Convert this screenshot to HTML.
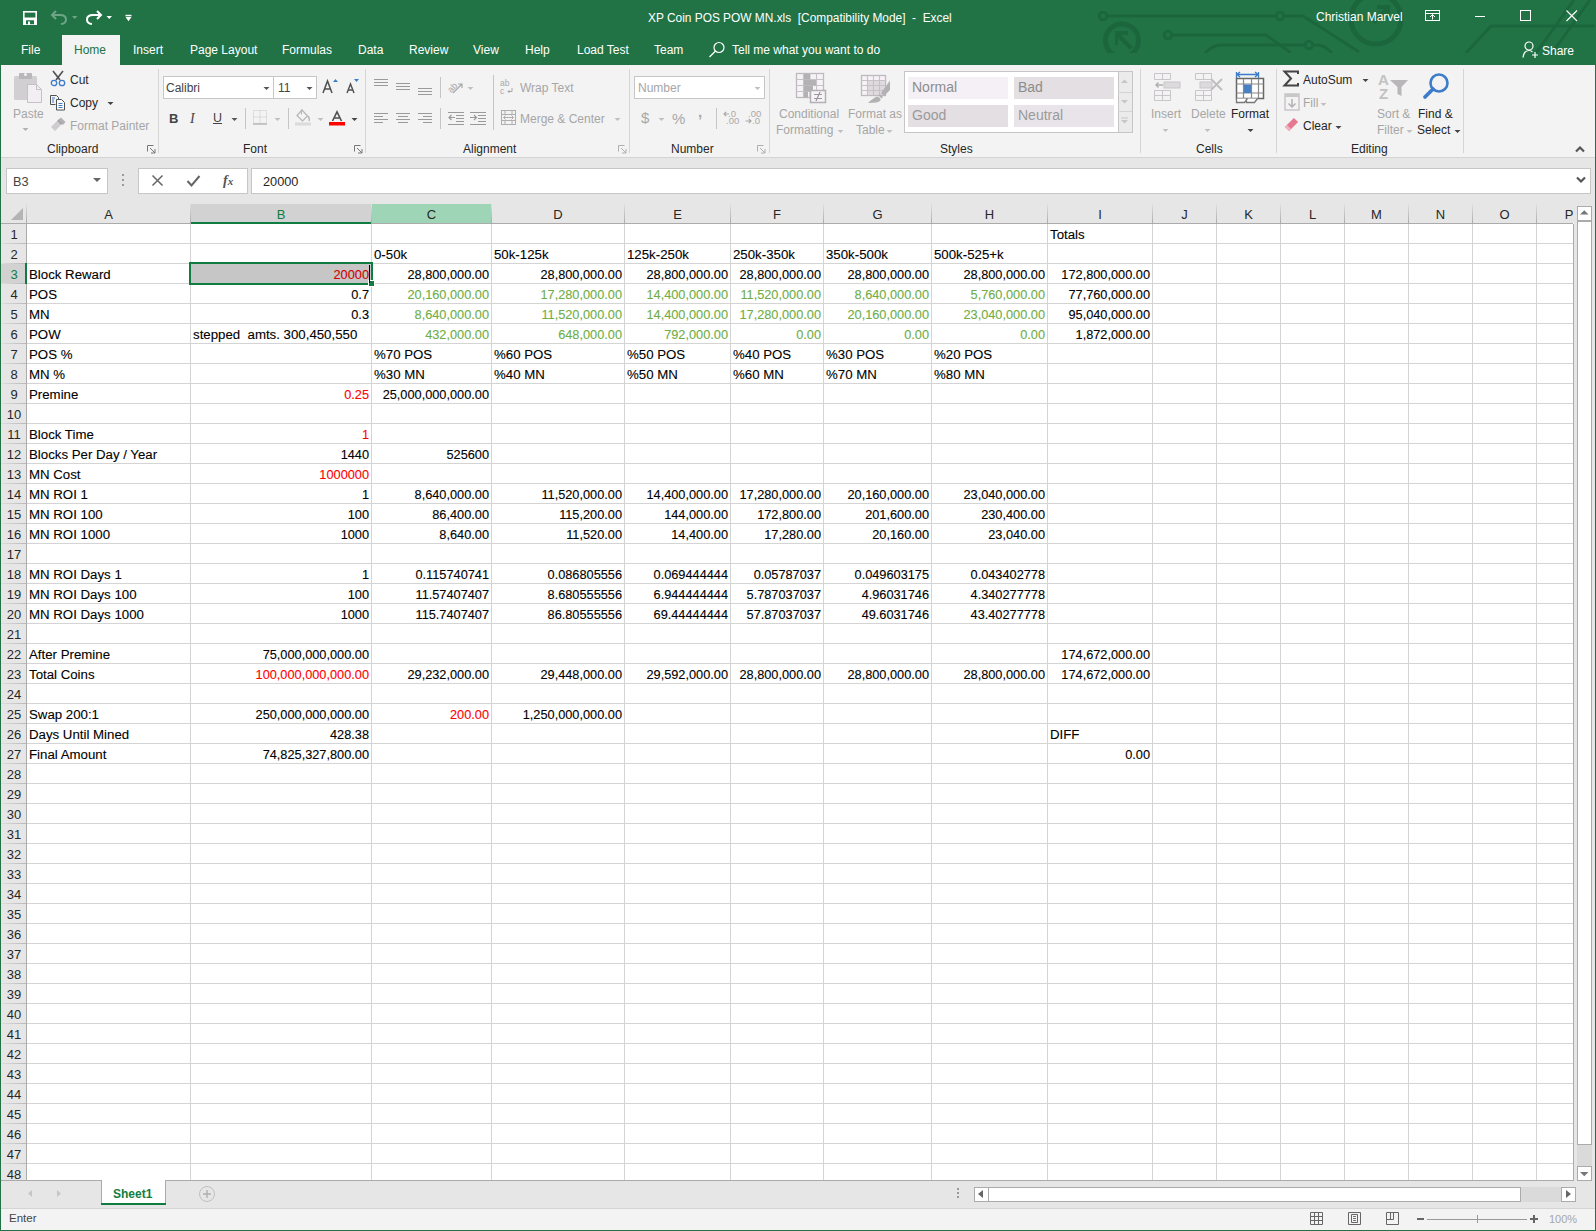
<!DOCTYPE html><html><head><meta charset="utf-8"><style>
html,body{margin:0;padding:0;}
body{width:1596px;height:1231px;position:relative;overflow:hidden;background:#fff;font-family:"Liberation Sans",sans-serif;}
.t{position:absolute;white-space:pre;line-height:20px;}
.r{position:absolute;}
.s{position:absolute;overflow:visible;}
</style></head><body>
<div class="r" style="left:0px;top:0px;width:1596px;height:65px;background:#217346;"></div>
<svg class="s" style="left:1080px;top:0px;overflow:hidden;" width="516" height="53" viewBox="0 0 516 53"><g fill="none" stroke="#1c663d" stroke-width="2.8">
<path d="M27 16 H196 M204 16 H223 L279 52"/>
<circle cx="23" cy="16" r="3.8"/><circle cx="200" cy="16" r="3.8"/>
<path d="M92 35 H186 L211 53"/><circle cx="88" cy="35" r="3.8"/>
<path d="M125 53 Q133 45 141 45 H225 M233 45 H238 Q244 45 252 53"/><circle cx="229" cy="45" r="3.8"/>
<path d="M386 53 L411 26 H516"/>
<path d="M456 53 L494 0 M472 53 L510 0"/>
</g>
<g fill="none" stroke="#1c663d" stroke-width="5"><circle cx="42" cy="40.5" r="16.5"/><circle cx="296" cy="19" r="25"/></g>
<g fill="#1c663d"><path d="M35 31 h13 v4 h-7 l12 12 -3 3 -12 -12 v7 h-3z"/><path d="M310 5 h-13 v4 h7 l-12 12 3 3 12 -12 v7 h3z"/></g></svg>
<svg class="s" style="left:0px;top:0px;" width="1" height="1" viewBox="0 0 1 1"></svg>
<svg class="s" style="left:22px;top:10px;" width="16" height="16" viewBox="0 0 16 16"><rect x="1.8" y="1.8" width="12.4" height="12.4" fill="none" stroke="#fff" stroke-width="1.6"/><rect x="1" y="7.5" width="14" height="7.5" fill="#fff"/><path d="M4 10.3h8v3.9h-4v-2.7h-2v2.7h-2z" fill="#217346"/></svg>
<svg class="s" style="left:50px;top:9px;" width="30" height="17" viewBox="0 0 30 17"><path d="M6 2 L2 6 L6 10 M2.5 6 H10 Q16 6 16 10.5 Q16 14.5 11 15" fill="none" stroke="#6fa487" stroke-width="2"/><path d="M22 7 h5.5 l-2.75 3z" fill="#6fa487"/></svg>
<svg class="s" style="left:85px;top:9px;" width="30" height="17" viewBox="0 0 30 17"><path d="M12 2 L16 6 L12 10 M15.5 6 H8 Q2 6 2 10.5 Q2 14.5 7 15" fill="none" stroke="#fff" stroke-width="2"/><path d="M21.5 7 h5.5 l-2.75 3z" fill="#fff"/></svg>
<svg class="s" style="left:125px;top:14px;" width="8" height="9" viewBox="0 0 8 9"><rect x="0.5" y="0.8" width="6" height="1.2" fill="#fff"/><path d="M0.3 2.8 h6.4 l-3.2 4.5z" fill="#fff"/></svg>
<div class="t" style="left:648px;top:7.88px;font-size:11.9px;color:#fff;">XP Coin POS POW MN.xls  [Compatibility Mode]  -  Excel</div>
<div class="t" style="left:1316px;top:6.84px;font-size:12px;color:#fff;">Christian Marvel</div>
<svg class="s" style="left:1425px;top:10px;" width="16" height="12" viewBox="0 0 16 12"><rect x="0.5" y="0.5" width="14" height="10" fill="none" stroke="#fff"/><path d="M0.5 3.5h14" stroke="#fff"/><path d="M7.5 9.5v-5 M5 7l2.5-2.5 2.5 2.5" fill="none" stroke="#fff"/></svg>
<div class="r" style="left:1475px;top:16px;width:10px;height:1px;background:#fff;"></div>
<svg class="s" style="left:1520px;top:10px;" width="12" height="12" viewBox="0 0 12 12"><rect x="0.5" y="0.5" width="10" height="10" fill="none" stroke="#fff"/></svg>
<svg class="s" style="left:1566px;top:10px;" width="12" height="12" viewBox="0 0 12 12"><path d="M0.5 0.5 L11 11 M11 0.5 L0.5 11" stroke="#fff" stroke-width="1.1"/></svg>
<svg class="s" style="left:1522px;top:41px;" width="18" height="18" viewBox="0 0 18 18"><circle cx="7" cy="5" r="4" fill="none" stroke="#fff" stroke-width="1.2"/><path d="M1 16.5 Q2 9.5 7 9.5 Q9 9.5 10.5 11" fill="none" stroke="#fff" stroke-width="1.2"/><path d="M13 11v6 M10 14h6" stroke="#fff" stroke-width="1.2"/></svg>
<div class="t" style="left:1542px;top:40.84px;font-size:12px;color:#fff;">Share</div>
<div class="r" style="left:62px;top:35px;width:58px;height:30px;background:#f3f3f3;"></div>
<div class="t" style="left:21px;top:39.84px;font-size:12px;color:#fff;">File</div>
<div class="t" style="left:133px;top:39.84px;font-size:12px;color:#fff;">Insert</div>
<div class="t" style="left:190px;top:39.84px;font-size:12px;color:#fff;">Page Layout</div>
<div class="t" style="left:282px;top:39.84px;font-size:12px;color:#fff;">Formulas</div>
<div class="t" style="left:358px;top:39.84px;font-size:12px;color:#fff;">Data</div>
<div class="t" style="left:409px;top:39.84px;font-size:12px;color:#fff;">Review</div>
<div class="t" style="left:473px;top:39.84px;font-size:12px;color:#fff;">View</div>
<div class="t" style="left:525px;top:39.84px;font-size:12px;color:#fff;">Help</div>
<div class="t" style="left:577px;top:39.84px;font-size:12px;color:#fff;">Load Test</div>
<div class="t" style="left:654px;top:39.84px;font-size:12px;color:#fff;">Team</div>
<div class="t" style="left:732px;top:39.84px;font-size:12px;color:#fff;">Tell me what you want to do</div>
<div class="t" style="left:74px;top:39.84px;font-size:12px;color:#217346;">Home</div>
<svg class="s" style="left:708px;top:41px;" width="18" height="18" viewBox="0 0 18 18"><circle cx="11" cy="6.5" r="5" fill="none" stroke="#fff" stroke-width="1.2"/><path d="M7.5 10 L1.5 16" stroke="#fff" stroke-width="1.3"/></svg>
<div class="r" style="left:1px;top:65px;width:1594px;height:92px;background:#f3f3f3;"></div>
<div class="r" style="left:1px;top:157px;width:1594px;height:1px;background:#d4d4d4;"></div>
<div class="r" style="left:158px;top:69px;width:1px;height:84px;background:#d5d5d5;"></div>
<div class="r" style="left:365px;top:69px;width:1px;height:84px;background:#d5d5d5;"></div>
<div class="r" style="left:629px;top:69px;width:1px;height:84px;background:#d5d5d5;"></div>
<div class="r" style="left:769px;top:69px;width:1px;height:84px;background:#d5d5d5;"></div>
<div class="r" style="left:1140px;top:69px;width:1px;height:84px;background:#d5d5d5;"></div>
<div class="r" style="left:1276px;top:69px;width:1px;height:84px;background:#d5d5d5;"></div>
<div class="r" style="left:1463px;top:69px;width:1px;height:84px;background:#d5d5d5;"></div>
<svg class="s" style="left:13px;top:72px;" width="32" height="32" viewBox="0 0 32 32"><rect x="1" y="4" width="23" height="24" rx="1.5" fill="#d1cfd1"/><rect x="6" y="1" width="13" height="6" rx="1" fill="#b9b7b9"/><circle cx="12.5" cy="2.5" r="1.5" fill="#f3f3f3"/><path d="M14.5 12.5h9l5 5v13h-14z" fill="#f3eef3" stroke="#c3c1c3"/><path d="M23.5 12.5v5h5" fill="none" stroke="#c3c1c3"/></svg>
<div class="t" style="left:13px;top:103.84px;font-size:12px;color:#a6a6a6;">Paste</div>
<svg class="s" style="left:22px;top:127.5px;" width="7" height="4" viewBox="0 0 7 4"><path d="M0.5 0h6l-3 3z" fill="#b0b0b0"/></svg>
<svg class="s" style="left:50px;top:70px;" width="17" height="17" viewBox="0 0 17 17"><path d="M3 1 L10 10 M13 1 L6 10" stroke="#505050" stroke-width="1.6"/><circle cx="4" cy="13" r="2.7" fill="none" stroke="#3d7cc9" stroke-width="1.3"/><circle cx="12" cy="13" r="2.7" fill="none" stroke="#3d7cc9" stroke-width="1.3"/></svg>
<div class="t" style="left:70px;top:69.84px;font-size:12px;color:#262626;">Cut</div>
<svg class="s" style="left:49px;top:94px;" width="17" height="17" viewBox="0 0 17 17"><path d="M1.5 1.5h6l2 2v2 M1.5 1.5v9h5" fill="none" stroke="#505050"/><path d="M3 4h3 M3 6h2 M3 8h2" stroke="#3d7cc9"/><path d="M7.5 5.5h5l3 3v7.5h-8z" fill="#fff" stroke="#505050"/><path d="M9.5 9.5h4 M9.5 11.5h4 M9.5 13.5h4" stroke="#3d7cc9"/></svg>
<div class="t" style="left:70px;top:92.84px;font-size:12px;color:#262626;">Copy</div>
<svg class="s" style="left:107px;top:101.5px;" width="7" height="4" viewBox="0 0 7 4"><path d="M0.5 0h6l-3 3z" fill="#444"/></svg>
<svg class="s" style="left:50px;top:117px;" width="17" height="15" viewBox="0 0 17 15"><path d="M1 10 L7 4 L11 8 L5 14z" fill="#cfcccf"/><path d="M8 3 L11 0.5 L15.5 5 L13 8z" fill="#b3b1b3"/><path d="M7 4 L8.5 2.5 L12.5 6.5 L11 8z" fill="#a5a3a5"/></svg>
<div class="t" style="left:70px;top:115.84px;font-size:12px;color:#a6a6a6;">Format Painter</div>
<div class="t" style="left:47px;top:138.84px;font-size:12px;color:#262626;">Clipboard</div>
<svg class="s" style="left:147px;top:145px;" width="9" height="9" viewBox="0 0 9 9"><path d="M0.5 6.5v-6h6" fill="none" stroke="#777"/><path d="M3 3l5 5 M8 4v4h-4" fill="none" stroke="#777"/></svg>
<div class="r" style="left:163px;top:76px;width:154px;height:23px;background:#fff;box-sizing:border-box;border:1px solid #c6c6c6;"></div>
<div class="r" style="left:273px;top:77px;width:1px;height:21px;background:#c6c6c6;"></div>
<div class="t" style="left:166px;top:77.84px;font-size:12px;color:#444;">Calibri</div>
<svg class="s" style="left:263px;top:86.5px;" width="7" height="4" viewBox="0 0 7 4"><path d="M0.5 0h6l-3 3z" fill="#555"/></svg>
<div class="t" style="left:278px;top:77.84px;font-size:12px;color:#444;">11</div>
<svg class="s" style="left:306px;top:86.5px;" width="7" height="4" viewBox="0 0 7 4"><path d="M0.5 0h6l-3 3z" fill="#555"/></svg>
<svg class="s" style="left:322px;top:79px;" width="16" height="15" viewBox="0 0 16 15"><path d="M1 14 L5.5 2 L10 14 M2.6 10h5.8" fill="none" stroke="#505050" stroke-width="1.5"/><path d="M11 3h5l-2.5-3z" fill="#3d7cc9"/></svg>
<svg class="s" style="left:345px;top:79px;" width="16" height="15" viewBox="0 0 16 15"><path d="M2 14 L5.5 5 L9 14 M3.2 11h4.6" fill="none" stroke="#505050" stroke-width="1.4"/><path d="M9 0h5l-2.5 3z" fill="#3d7cc9"/></svg>
<div class="t" style="left:169px;top:108.50px;font-size:13px;color:#444;"><b>B</b></div>
<div class="t" style="left:190px;top:108.50px;font-size:13px;color:#444;font-family:Liberation Serif;font-size:14px;"><i>I</i></div>
<div class="t" style="left:213px;top:107.67px;font-size:12.5px;color:#444;"><u>U</u></div>
<svg class="s" style="left:231px;top:117.5px;" width="7" height="4" viewBox="0 0 7 4"><path d="M0.5 0h6l-3 3z" fill="#555"/></svg>
<div class="r" style="left:245px;top:108px;width:1px;height:21px;background:#c6c6c6;"></div>
<svg class="s" style="left:253px;top:110px;" width="15" height="15" viewBox="0 0 15 15"><path d="M0.5 0.5h13v13h-13z M0.5 7h13 M7 0.5v13" fill="none" stroke="#c8c4c8" stroke-dasharray="1 1"/><path d="M0 14h14" stroke="#b8b8b8" stroke-width="1.5"/></svg>
<svg class="s" style="left:274px;top:117.5px;" width="7" height="4" viewBox="0 0 7 4"><path d="M0.5 0h6l-3 3z" fill="#c0c0c0"/></svg>
<div class="r" style="left:288px;top:108px;width:1px;height:21px;background:#c6c6c6;"></div>
<svg class="s" style="left:295px;top:109px;" width="18" height="18" viewBox="0 0 18 18"><path d="M7 1 L12.5 7 L7.5 12 L2 6.5z" fill="none" stroke="#b8b5b8" stroke-width="1.2"/><path d="M6.5 0.5v5" stroke="#b8b5b8"/><path d="M13 7 q2 3 1 5" fill="none" stroke="#b8b5b8" stroke-width="1.4"/><rect x="0" y="13.5" width="16" height="3" fill="#dcdadc"/></svg>
<svg class="s" style="left:317px;top:117.5px;" width="7" height="4" viewBox="0 0 7 4"><path d="M0.5 0h6l-3 3z" fill="#c0c0c0"/></svg>
<svg class="s" style="left:329px;top:111px;" width="18" height="15" viewBox="0 0 18 15"><path d="M3.5 10 L8 0.8 L12.5 10 M5 7h6" fill="none" stroke="#505050" stroke-width="1.6"/><rect x="0" y="11" width="16" height="3.5" fill="#f00"/></svg>
<svg class="s" style="left:351px;top:117.5px;" width="7" height="4" viewBox="0 0 7 4"><path d="M0.5 0h6l-3 3z" fill="#444"/></svg>
<div class="t" style="left:243px;top:138.84px;font-size:12px;color:#262626;">Font</div>
<svg class="s" style="left:354px;top:145px;" width="9" height="9" viewBox="0 0 9 9"><path d="M0.5 6.5v-6h6" fill="none" stroke="#777"/><path d="M3 3l5 5 M8 4v4h-4" fill="none" stroke="#777"/></svg>
<svg class="s" style="left:374px;top:0px;" width="16" height="200" viewBox="0 0 16 200"><rect x="0" y="79" width="14" height="1" fill="#9a9a9a"/><rect x="0" y="82" width="14" height="1" fill="#9a9a9a"/><rect x="0" y="85" width="14" height="1" fill="#9a9a9a"/></svg>
<svg class="s" style="left:396px;top:0px;" width="16" height="200" viewBox="0 0 16 200"><rect x="0" y="83" width="14" height="1" fill="#9a9a9a"/><rect x="0" y="86" width="14" height="1" fill="#9a9a9a"/><rect x="0" y="89" width="14" height="1" fill="#9a9a9a"/></svg>
<svg class="s" style="left:418px;top:0px;" width="16" height="200" viewBox="0 0 16 200"><rect x="0" y="88" width="14" height="1" fill="#9a9a9a"/><rect x="0" y="91" width="14" height="1" fill="#9a9a9a"/><rect x="0" y="94" width="14" height="1" fill="#9a9a9a"/></svg>
<svg class="s" style="left:374px;top:0px;" width="16" height="200" viewBox="0 0 16 200"><rect x="0" y="113" width="14" height="1" fill="#9a9a9a"/><rect x="0" y="116" width="9" height="1" fill="#9a9a9a"/><rect x="0" y="119" width="14" height="1" fill="#9a9a9a"/><rect x="0" y="122" width="9" height="1" fill="#9a9a9a"/></svg>
<svg class="s" style="left:396px;top:0px;" width="16" height="200" viewBox="0 0 16 200"><rect x="0" y="113" width="14" height="1" fill="#9a9a9a"/><rect x="2" y="116" width="10" height="1" fill="#9a9a9a"/><rect x="0" y="119" width="14" height="1" fill="#9a9a9a"/><rect x="2" y="122" width="10" height="1" fill="#9a9a9a"/></svg>
<svg class="s" style="left:418px;top:0px;" width="16" height="200" viewBox="0 0 16 200"><rect x="0" y="113" width="14" height="1" fill="#9a9a9a"/><rect x="5" y="116" width="9" height="1" fill="#9a9a9a"/><rect x="0" y="119" width="14" height="1" fill="#9a9a9a"/><rect x="5" y="122" width="9" height="1" fill="#9a9a9a"/></svg>
<div class="r" style="left:440px;top:77px;width:1px;height:21px;background:#c6c6c6;"></div>
<div class="r" style="left:440px;top:108px;width:1px;height:21px;background:#c6c6c6;"></div>
<svg class="s" style="left:447px;top:79px;" width="18" height="16" viewBox="0 0 18 16"><text x="0" y="11" font-size="9" fill="#a8a8a8" transform="rotate(-45 6 8)" font-family="Liberation Sans">ab</text><path d="M6 14 L15 5 M11 5h4v4" fill="none" stroke="#a8a8a8" stroke-width="1.2"/></svg>
<svg class="s" style="left:467px;top:86.5px;" width="7" height="4" viewBox="0 0 7 4"><path d="M0.5 0h6l-3 3z" fill="#c0c0c0"/></svg>
<svg class="s" style="left:448px;top:0px;" width="16" height="200" viewBox="0 0 16 200"><rect x="0" y="112" width="16" height="1" fill="#9a9a9a"/><rect x="8" y="115" width="8" height="1" fill="#9a9a9a"/><rect x="8" y="118" width="8" height="1" fill="#9a9a9a"/><rect x="8" y="121" width="8" height="1" fill="#9a9a9a"/><rect x="0" y="124" width="16" height="1" fill="#9a9a9a"/></svg>
<svg class="s" style="left:448px;top:114px;" width="8" height="8" viewBox="0 0 8 8"><path d="M1 3.5h6 M3.5 1l-2.5 2.5 2.5 2.5" fill="none" stroke="#9a9a9a" stroke-width="1.2"/></svg>
<svg class="s" style="left:470px;top:0px;" width="16" height="200" viewBox="0 0 16 200"><rect x="0" y="112" width="16" height="1" fill="#9a9a9a"/><rect x="8" y="115" width="8" height="1" fill="#9a9a9a"/><rect x="8" y="118" width="8" height="1" fill="#9a9a9a"/><rect x="8" y="121" width="8" height="1" fill="#9a9a9a"/><rect x="0" y="124" width="16" height="1" fill="#9a9a9a"/></svg>
<svg class="s" style="left:470px;top:114px;" width="8" height="8" viewBox="0 0 8 8"><path d="M0 3.5h6 M4 1l2.5 2.5 -2.5 2.5" fill="none" stroke="#9a9a9a" stroke-width="1.2"/></svg>
<div class="r" style="left:493px;top:75px;width:1px;height:55px;background:#c6c6c6;"></div>
<svg class="s" style="left:500px;top:79px;" width="16" height="16" viewBox="0 0 16 16"><text x="0" y="7" font-size="8.5" fill="#a8a8a8" font-family="Liberation Sans">ab</text><text x="0" y="15" font-size="8.5" fill="#a8a8a8" font-family="Liberation Sans">c</text><path d="M12 9v3.5h-4 M9.5 11l-1.5 1.5 1.5 1.5" fill="none" stroke="#a8a8a8"/></svg>
<div class="t" style="left:520px;top:77.84px;font-size:12px;color:#a6a6a6;">Wrap Text</div>
<svg class="s" style="left:500px;top:109px;" width="17" height="17" viewBox="0 0 17 17"><rect x="1.5" y="1.5" width="14" height="14" fill="none" stroke="#b0adb0"/><path d="M1.5 5.5h14 M1.5 11.5h14 M5 1.5v4 M12 1.5v4 M5 11.5v4 M12 11.5v4" stroke="#b0adb0"/><path d="M3.5 8.5h10 M5.5 6.5l-2 2 2 2 M11.5 6.5l2 2-2 2" fill="none" stroke="#b0adb0"/></svg>
<div class="t" style="left:520px;top:108.84px;font-size:12px;color:#a6a6a6;">Merge &amp; Center</div>
<svg class="s" style="left:614px;top:117.5px;" width="7" height="4" viewBox="0 0 7 4"><path d="M0.5 0h6l-3 3z" fill="#c0c0c0"/></svg>
<div class="t" style="left:463px;top:138.84px;font-size:12px;color:#262626;">Alignment</div>
<svg class="s" style="left:618px;top:145px;" width="9" height="9" viewBox="0 0 9 9"><path d="M0.5 6.5v-6h6" fill="none" stroke="#b0b0b0"/><path d="M3 3l5 5 M8 4v4h-4" fill="none" stroke="#b0b0b0"/></svg>
<div class="r" style="left:634px;top:76px;width:131px;height:23px;background:#fff;box-sizing:border-box;border:1px solid #c6c6c6;"></div>
<div class="t" style="left:638px;top:77.84px;font-size:12px;color:#a6a6a6;">Number</div>
<svg class="s" style="left:754px;top:86.5px;" width="7" height="4" viewBox="0 0 7 4"><path d="M0.5 0h6l-3 3z" fill="#c0c0c0"/></svg>
<div class="t" style="left:641px;top:107.80px;font-size:15px;color:#a8a8a8;">$</div>
<svg class="s" style="left:658px;top:117.5px;" width="7" height="4" viewBox="0 0 7 4"><path d="M0.5 0h6l-3 3z" fill="#c0c0c0"/></svg>
<div class="t" style="left:672px;top:108.80px;font-size:15px;color:#a8a8a8;">%</div>
<div class="t" style="left:698px;top:101.80px;font-size:15px;color:#a8a8a8;font-weight:bold;">,</div>
<div class="r" style="left:716px;top:108px;width:1px;height:21px;background:#c6c6c6;"></div>
<svg class="s" style="left:723px;top:110px;" width="17" height="16" viewBox="0 0 17 16"><text x="5" y="7" font-size="9.5" fill="#a8a8a8" font-family="Liberation Sans">.0</text><text x="3" y="14" font-size="9.5" fill="#a8a8a8" font-family="Liberation Sans">.00</text><path d="M1 4h5 M3.2 1.8l-2.2 2.2 2.2 2.2" fill="none" stroke="#a8a8a8" stroke-width="1.2"/></svg>
<svg class="s" style="left:745px;top:110px;" width="17" height="16" viewBox="0 0 17 16"><text x="3" y="7" font-size="9.5" fill="#a8a8a8" font-family="Liberation Sans">.00</text><text x="7" y="14" font-size="9.5" fill="#a8a8a8" font-family="Liberation Sans">.0</text><path d="M0.5 11h5.5 M3.8 8.8l2.2 2.2-2.2 2.2" fill="none" stroke="#a8a8a8" stroke-width="1.2"/></svg>
<div class="t" style="left:671px;top:138.84px;font-size:12px;color:#262626;">Number</div>
<svg class="s" style="left:757px;top:145px;" width="9" height="9" viewBox="0 0 9 9"><path d="M0.5 6.5v-6h6" fill="none" stroke="#b0b0b0"/><path d="M3 3l5 5 M8 4v4h-4" fill="none" stroke="#b0b0b0"/></svg>
<svg class="s" style="left:795px;top:72px;" width="33" height="33" viewBox="0 0 33 33"><rect x="1.5" y="1.5" width="27" height="24" fill="#f7f2f7" stroke="#bdbabd" stroke-width="1.3"/><path d="M1.5 7.5h27 M1.5 13.5h27 M1.5 19.5h27 M8.5 1.5v24 M15 1.5v24 M21.5 1.5v24" stroke="#c6c3c6" stroke-width="1.1"/><g fill="#b3b1b3"><rect x="9" y="2" width="6" height="5.5"/><rect x="9" y="8" width="12" height="5.5"/><rect x="9" y="14" width="9" height="5.5"/><rect x="9" y="20" width="4" height="5.5"/></g><rect x="15.5" y="18.5" width="15" height="12" fill="#f7f2f7" stroke="#b3b1b3" stroke-width="1.5"/><path d="M19 22.5h8 M19 26.5h8 M25 20 L21 29" stroke="#9a989a" stroke-width="1.2"/></svg>
<div class="t" style="left:779px;top:103.84px;font-size:12px;color:#a6a6a6;">Conditional</div>
<div class="t" style="left:776px;top:119.84px;font-size:12px;color:#a6a6a6;">Formatting</div>
<svg class="s" style="left:837px;top:129.5px;" width="7" height="4" viewBox="0 0 7 4"><path d="M0.5 0h6l-3 3z" fill="#c0c0c0"/></svg>
<svg class="s" style="left:860px;top:73px;" width="32" height="32" viewBox="0 0 32 32"><rect x="1.5" y="2.5" width="24" height="20" fill="#f7f2f7" stroke="#bdbabd" stroke-width="1.3"/><rect x="8" y="8" width="17" height="14" fill="#dedade"/><path d="M1.5 7.5h24 M1.5 12.5h24 M1.5 17.5h24 M7.5 2.5v20 M13.5 2.5v20 M19.5 2.5v20" stroke="#c6c3c6" stroke-width="1.1"/><path d="M30 7.5 V17 L24 23 L21 20z" fill="#b3b1b3"/><path d="M20 21 L23 24 L21.5 25.5 L18.5 22.5z" fill="#b3b1b3"/><path d="M17 23.5 Q21 24.5 20.5 27.5 Q19 30 8 30 Q13 25 17 23.5z" fill="#b3b1b3"/></svg>
<div class="t" style="left:848px;top:103.84px;font-size:12px;color:#a6a6a6;">Format as</div>
<div class="t" style="left:856px;top:119.84px;font-size:12px;color:#a6a6a6;">Table</div>
<svg class="s" style="left:886px;top:129.5px;" width="7" height="4" viewBox="0 0 7 4"><path d="M0.5 0h6l-3 3z" fill="#c0c0c0"/></svg>
<div class="r" style="left:904px;top:71px;width:229px;height:62px;background:#fff;box-sizing:border-box;border:1px solid #c6c6c6;"></div>
<div class="r" style="left:1118px;top:72px;width:14px;height:60px;background:#ebebeb;border-left:1px solid #c6c6c6;box-sizing:border-box;"></div>
<div class="r" style="left:1118px;top:92px;width:14px;height:1px;background:#d4d4d4;"></div>
<div class="r" style="left:1118px;top:111px;width:14px;height:1px;background:#d4d4d4;"></div>
<svg class="s" style="left:1121px;top:79px;" width="8" height="5" viewBox="0 0 8 5"><path d="M0 4h7l-3.5-3.5z" fill="#c6c6c6"/></svg>
<svg class="s" style="left:1121px;top:100px;" width="8" height="5" viewBox="0 0 8 5"><path d="M0 0h7l-3.5 3.5z" fill="#c6c6c6"/></svg>
<svg class="s" style="left:1121px;top:117px;" width="8" height="8" viewBox="0 0 8 8"><path d="M0 1h7" stroke="#c6c6c6"/><path d="M0 3h7l-3.5 3.5z" fill="#c6c6c6"/></svg>
<div class="r" style="left:908px;top:77px;width:100px;height:22px;background:#f5f0f5;"></div>
<div class="r" style="left:1014px;top:77px;width:100px;height:22px;background:#e4dfe3;"></div>
<div class="r" style="left:908px;top:105px;width:100px;height:22px;background:#e4dfe3;"></div>
<div class="r" style="left:1014px;top:105px;width:100px;height:22px;background:#e9e4e9;"></div>
<div class="t" style="left:912px;top:77.15px;font-size:14px;color:#8c8c8c;">Normal</div>
<div class="t" style="left:1018px;top:77.15px;font-size:14px;color:#8c8c8c;">Bad</div>
<div class="t" style="left:912px;top:105.15px;font-size:14px;color:#9a9a9a;">Good</div>
<div class="t" style="left:1018px;top:105.15px;font-size:14px;color:#9a9a9a;">Neutral</div>
<div class="t" style="left:940px;top:138.84px;font-size:12px;color:#262626;">Styles</div>
<svg class="s" style="left:1153px;top:73px;" width="28" height="28" viewBox="0 0 28 28"><g fill="none" stroke="#c9c6c9"><path d="M1.5 0.5h16v6h-16z M9.5 0.5v6 M1.5 17.5h16v10h-16z M1.5 22.5h16 M9.5 17.5v10"/></g><rect x="11" y="9" width="16" height="6" fill="#dcdadc" stroke="#c9c6c9"/><path d="M3 12h7 M5.5 9.5l-2.5 2.5 2.5 2.5" fill="none" stroke="#b3b1b3" stroke-width="1.5"/></svg>
<div class="t" style="left:1151px;top:103.84px;font-size:12px;color:#a6a6a6;">Insert</div>
<svg class="s" style="left:1162px;top:128.5px;" width="7" height="4" viewBox="0 0 7 4"><path d="M0.5 0h6l-3 3z" fill="#c0c0c0"/></svg>
<svg class="s" style="left:1194px;top:73px;" width="30" height="28" viewBox="0 0 30 28"><g fill="none" stroke="#c9c6c9"><path d="M1.5 0.5h16v6h-16z M9.5 0.5v6 M1.5 17.5h16v10h-16z M1.5 22.5h16 M9.5 17.5v10"/></g><rect x="6" y="9" width="12" height="6" fill="#dcdadc" stroke="#c9c6c9"/><path d="M17 6 L28 17 M28 6 L17 17" stroke="#c0bec0" stroke-width="2"/></svg>
<div class="t" style="left:1191px;top:103.84px;font-size:12px;color:#a6a6a6;">Delete</div>
<svg class="s" style="left:1204px;top:128.5px;" width="7" height="4" viewBox="0 0 7 4"><path d="M0.5 0h6l-3 3z" fill="#c0c0c0"/></svg>
<svg class="s" style="left:1235px;top:71px;" width="31" height="33" viewBox="0 0 31 33"><path d="M1.5 1v6 M23.5 1v6 M2 3.5h21 M5 1l-3 2.5 3 2.5 M20 1l3 2.5-3 2.5" fill="none" stroke="#3d7cc9" stroke-width="1.3"/><rect x="1.5" y="7.5" width="27" height="20" fill="#fff" stroke="#666" stroke-width="1.5"/><path d="M1.5 13h27 M1.5 22h27 M8.5 7.5v20 M16.5 7.5v20 M23.5 7.5v20" stroke="#888" stroke-width="1.2"/><rect x="9" y="13.5" width="7" height="8.5" fill="#4a7fc0"/><path d="M1.5 27.5v4h8l3-4 M11.5 27.5v4h8l3-4" fill="#fff" stroke="#777" stroke-width="1.3"/></svg>
<div class="t" style="left:1231px;top:103.84px;font-size:12px;color:#262626;">Format</div>
<svg class="s" style="left:1247px;top:128.5px;" width="7" height="4" viewBox="0 0 7 4"><path d="M0.5 0h6l-3 3z" fill="#444"/></svg>
<div class="t" style="left:1196px;top:138.84px;font-size:12px;color:#262626;">Cells</div>
<svg class="s" style="left:1283px;top:70px;" width="17" height="17" viewBox="0 0 17 17"><path d="M15 4 V1.5 H1.5 L8 8.5 L1.5 15.5 H15 V13" fill="none" stroke="#444" stroke-width="2"/></svg>
<div class="t" style="left:1303px;top:69.84px;font-size:12px;color:#262626;">AutoSum</div>
<svg class="s" style="left:1362px;top:78.5px;" width="7" height="4" viewBox="0 0 7 4"><path d="M0.5 0h6l-3 3z" fill="#444"/></svg>
<svg class="s" style="left:1284px;top:93px;" width="17" height="18" viewBox="0 0 17 18"><rect x="1" y="1" width="14" height="16" fill="none" stroke="#c9c6c9" stroke-width="1.5"/><rect x="1" y="1" width="14" height="3" fill="#c9c6c9"/><path d="M8 6v8 M4.5 10.5 L8 14 L11.5 10.5" fill="none" stroke="#b3b1b3" stroke-width="1.5"/></svg>
<div class="t" style="left:1303px;top:92.84px;font-size:12px;color:#a6a6a6;">Fill</div>
<svg class="s" style="left:1320px;top:102.5px;" width="7" height="4" viewBox="0 0 7 4"><path d="M0.5 0h6l-3 3z" fill="#c0c0c0"/></svg>
<svg class="s" style="left:1284px;top:117px;" width="16" height="16" viewBox="0 0 16 16"><path d="M0.9 9.9 L9.9 0.9 L14.1 5.1 L5.1 14.1z" fill="#e57990"/><path d="M0.9 9.9 L2.9 7.9 L7.1 12.1 L5.1 14.1z" fill="#f4b3c1"/></svg>
<div class="t" style="left:1303px;top:115.84px;font-size:12px;color:#262626;">Clear</div>
<svg class="s" style="left:1335px;top:125.5px;" width="7" height="4" viewBox="0 0 7 4"><path d="M0.5 0h6l-3 3z" fill="#444"/></svg>
<svg class="s" style="left:1378px;top:72px;" width="32" height="30" viewBox="0 0 32 30"><text x="0" y="13" font-size="15" font-weight="bold" fill="#c3c1c3" font-family="Liberation Sans">A</text><text x="1" y="27" font-size="15" font-weight="bold" fill="#c3c1c3" font-family="Liberation Sans">Z</text><path d="M12 8h18l-6.5 7v9l-4-2v-7z" fill="#b8b6b8"/></svg>
<div class="t" style="left:1377px;top:103.84px;font-size:12px;color:#a6a6a6;">Sort &amp;</div>
<div class="t" style="left:1377px;top:119.84px;font-size:12px;color:#a6a6a6;">Filter</div>
<svg class="s" style="left:1406px;top:129.5px;" width="7" height="4" viewBox="0 0 7 4"><path d="M0.5 0h6l-3 3z" fill="#c0c0c0"/></svg>
<svg class="s" style="left:1422px;top:72px;" width="30" height="30" viewBox="0 0 30 30"><circle cx="17" cy="11" r="8.5" fill="none" stroke="#3d7cc9" stroke-width="2.6"/><path d="M11 17 L3 25" stroke="#3d7cc9" stroke-width="3.8" stroke-linecap="round"/></svg>
<div class="t" style="left:1418px;top:103.84px;font-size:12px;color:#262626;">Find &amp;</div>
<div class="t" style="left:1417px;top:119.84px;font-size:12px;color:#262626;">Select</div>
<svg class="s" style="left:1454px;top:129.5px;" width="7" height="4" viewBox="0 0 7 4"><path d="M0.5 0h6l-3 3z" fill="#444"/></svg>
<div class="t" style="left:1351px;top:138.84px;font-size:12px;color:#262626;">Editing</div>
<svg class="s" style="left:1575px;top:145px;" width="11" height="8" viewBox="0 0 11 8"><path d="M1 6.5 L5 2.5 L9 6.5" fill="none" stroke="#555" stroke-width="2.2"/></svg>
<div class="r" style="left:1px;top:158px;width:1594px;height:46px;background:#e6e6e6;"></div>
<div class="r" style="left:6px;top:168px;width:102px;height:26px;background:#fff;box-sizing:border-box;border:1px solid #c6c6c6;"></div>
<div class="t" style="left:13px;top:171.58px;font-size:12.75px;color:#444;">B3</div>
<svg class="s" style="left:93px;top:178px;" width="9" height="6" viewBox="0 0 9 6"><path d="M0 0h8l-4 4z" fill="#666"/></svg>
<div class="r" style="left:122px;top:174px;width:2px;height:2px;background:#9a9a9a;"></div>
<div class="r" style="left:122px;top:179px;width:2px;height:2px;background:#9a9a9a;"></div>
<div class="r" style="left:122px;top:184px;width:2px;height:2px;background:#9a9a9a;"></div>
<div class="r" style="left:138px;top:168px;width:110px;height:26px;background:#fff;box-sizing:border-box;border:1px solid #c6c6c6;"></div>
<svg class="s" style="left:151px;top:174px;" width="14" height="14" viewBox="0 0 14 14"><path d="M1.5 1.5 L11.5 11.5 M11.5 1.5 L1.5 11.5" stroke="#666" stroke-width="1.5"/></svg>
<svg class="s" style="left:186px;top:174px;" width="16" height="14" viewBox="0 0 16 14"><path d="M1.5 7 L5.5 11.5 L13.5 2" fill="none" stroke="#666" stroke-width="2"/></svg>
<div class="t" style="left:223px;top:171.15px;font-size:14px;color:#555;font-family:Liberation Serif;font-style:italic;font-weight:bold;">f<span style="font-size:11px">x</span></div>
<div class="r" style="left:251px;top:168px;width:1340px;height:26px;background:#fff;box-sizing:border-box;border:1px solid #c6c6c6;"></div>
<div class="t" style="left:263px;top:171.58px;font-size:12.75px;color:#262626;">20000</div>
<svg class="s" style="left:1576px;top:176px;" width="11" height="8" viewBox="0 0 11 8"><path d="M1 1.5 L5 5.5 L9 1.5" fill="none" stroke="#555" stroke-width="2.2"/></svg>
<div class="r" style="left:1px;top:204px;width:1594px;height:19px;background:#e6e6e6;"></div>
<div class="r" style="left:191px;top:204px;width:180px;height:18px;background:#d2d2d2;"></div>
<div class="r" style="left:191px;top:222px;width:180px;height:2px;background:#107c41;"></div>
<div class="r" style="left:372px;top:204px;width:119px;height:19px;background:#9fd5b7;"></div>
<div class="r" style="left:1px;top:223px;width:190px;height:1px;background:#ababab;"></div>
<div class="r" style="left:371px;top:223px;width:1202px;height:1px;background:#ababab;"></div>
<svg class="s" style="left:11px;top:208px;" width="12" height="12" viewBox="0 0 12 12"><path d="M12 0 V12 H0z" fill="#b4b4b4"/></svg>
<div class="r" style="left:26px;top:204px;width:1px;height:20px;background:linear-gradient(#e0e0e0,#a8a8a8);"></div>
<div class="r" style="left:190px;top:204px;width:1px;height:20px;background:linear-gradient(#e0e0e0,#a8a8a8);"></div>
<div class="r" style="left:371px;top:204px;width:1px;height:20px;background:linear-gradient(#e0e0e0,#a8a8a8);"></div>
<div class="r" style="left:491px;top:204px;width:1px;height:20px;background:linear-gradient(#e0e0e0,#a8a8a8);"></div>
<div class="r" style="left:624px;top:204px;width:1px;height:20px;background:linear-gradient(#e0e0e0,#a8a8a8);"></div>
<div class="r" style="left:730px;top:204px;width:1px;height:20px;background:linear-gradient(#e0e0e0,#a8a8a8);"></div>
<div class="r" style="left:823px;top:204px;width:1px;height:20px;background:linear-gradient(#e0e0e0,#a8a8a8);"></div>
<div class="r" style="left:931px;top:204px;width:1px;height:20px;background:linear-gradient(#e0e0e0,#a8a8a8);"></div>
<div class="r" style="left:1047px;top:204px;width:1px;height:20px;background:linear-gradient(#e0e0e0,#a8a8a8);"></div>
<div class="r" style="left:1152px;top:204px;width:1px;height:20px;background:linear-gradient(#e0e0e0,#a8a8a8);"></div>
<div class="r" style="left:1216px;top:204px;width:1px;height:20px;background:linear-gradient(#e0e0e0,#a8a8a8);"></div>
<div class="r" style="left:1280px;top:204px;width:1px;height:20px;background:linear-gradient(#e0e0e0,#a8a8a8);"></div>
<div class="r" style="left:1344px;top:204px;width:1px;height:20px;background:linear-gradient(#e0e0e0,#a8a8a8);"></div>
<div class="r" style="left:1408px;top:204px;width:1px;height:20px;background:linear-gradient(#e0e0e0,#a8a8a8);"></div>
<div class="r" style="left:1472px;top:204px;width:1px;height:20px;background:linear-gradient(#e0e0e0,#a8a8a8);"></div>
<div class="r" style="left:1536px;top:204px;width:1px;height:20px;background:linear-gradient(#e0e0e0,#a8a8a8);"></div>
<div class="t" style="left:-91.5px;width:400px;text-align:center;top:204.50px;font-size:13px;color:#262626;">A</div>
<div class="t" style="left:81.0px;width:400px;text-align:center;top:204.50px;font-size:13px;color:#107c41;">B</div>
<div class="t" style="left:231.5px;width:400px;text-align:center;top:204.50px;font-size:13px;color:#262626;">C</div>
<div class="t" style="left:358.0px;width:400px;text-align:center;top:204.50px;font-size:13px;color:#262626;">D</div>
<div class="t" style="left:477.5px;width:400px;text-align:center;top:204.50px;font-size:13px;color:#262626;">E</div>
<div class="t" style="left:577.0px;width:400px;text-align:center;top:204.50px;font-size:13px;color:#262626;">F</div>
<div class="t" style="left:677.5px;width:400px;text-align:center;top:204.50px;font-size:13px;color:#262626;">G</div>
<div class="t" style="left:789.5px;width:400px;text-align:center;top:204.50px;font-size:13px;color:#262626;">H</div>
<div class="t" style="left:900.0px;width:400px;text-align:center;top:204.50px;font-size:13px;color:#262626;">I</div>
<div class="t" style="left:984.5px;width:400px;text-align:center;top:204.50px;font-size:13px;color:#262626;">J</div>
<div class="t" style="left:1048.5px;width:400px;text-align:center;top:204.50px;font-size:13px;color:#262626;">K</div>
<div class="t" style="left:1112.5px;width:400px;text-align:center;top:204.50px;font-size:13px;color:#262626;">L</div>
<div class="t" style="left:1176.5px;width:400px;text-align:center;top:204.50px;font-size:13px;color:#262626;">M</div>
<div class="t" style="left:1240.5px;width:400px;text-align:center;top:204.50px;font-size:13px;color:#262626;">N</div>
<div class="t" style="left:1304.5px;width:400px;text-align:center;top:204.50px;font-size:13px;color:#262626;">O</div>
<div class="t" style="left:1369px;width:400px;text-align:center;top:204.50px;font-size:13px;color:#262626;">P</div>
<div class="r" style="left:1px;top:224px;width:25px;height:956px;background:#e6e6e6;"></div>
<div class="r" style="left:1px;top:264px;width:25px;height:19px;background:#d2d2d2;"></div>
<div class="r" style="left:1px;top:243px;width:25px;height:1px;background:linear-gradient(90deg,#dedede,#b8b8b8);"></div>
<div class="r" style="left:27px;top:243px;width:1546px;height:1px;background:#d4d4d4;"></div>
<div class="r" style="left:1px;top:263px;width:25px;height:1px;background:linear-gradient(90deg,#dedede,#b8b8b8);"></div>
<div class="r" style="left:27px;top:263px;width:1546px;height:1px;background:#d4d4d4;"></div>
<div class="r" style="left:1px;top:283px;width:25px;height:1px;background:linear-gradient(90deg,#dedede,#b8b8b8);"></div>
<div class="r" style="left:27px;top:283px;width:1546px;height:1px;background:#d4d4d4;"></div>
<div class="r" style="left:1px;top:303px;width:25px;height:1px;background:linear-gradient(90deg,#dedede,#b8b8b8);"></div>
<div class="r" style="left:27px;top:303px;width:1546px;height:1px;background:#d4d4d4;"></div>
<div class="r" style="left:1px;top:323px;width:25px;height:1px;background:linear-gradient(90deg,#dedede,#b8b8b8);"></div>
<div class="r" style="left:27px;top:323px;width:1546px;height:1px;background:#d4d4d4;"></div>
<div class="r" style="left:1px;top:343px;width:25px;height:1px;background:linear-gradient(90deg,#dedede,#b8b8b8);"></div>
<div class="r" style="left:27px;top:343px;width:1546px;height:1px;background:#d4d4d4;"></div>
<div class="r" style="left:1px;top:363px;width:25px;height:1px;background:linear-gradient(90deg,#dedede,#b8b8b8);"></div>
<div class="r" style="left:27px;top:363px;width:1546px;height:1px;background:#d4d4d4;"></div>
<div class="r" style="left:1px;top:383px;width:25px;height:1px;background:linear-gradient(90deg,#dedede,#b8b8b8);"></div>
<div class="r" style="left:27px;top:383px;width:1546px;height:1px;background:#d4d4d4;"></div>
<div class="r" style="left:1px;top:403px;width:25px;height:1px;background:linear-gradient(90deg,#dedede,#b8b8b8);"></div>
<div class="r" style="left:27px;top:403px;width:1546px;height:1px;background:#d4d4d4;"></div>
<div class="r" style="left:1px;top:423px;width:25px;height:1px;background:linear-gradient(90deg,#dedede,#b8b8b8);"></div>
<div class="r" style="left:27px;top:423px;width:1546px;height:1px;background:#d4d4d4;"></div>
<div class="r" style="left:1px;top:443px;width:25px;height:1px;background:linear-gradient(90deg,#dedede,#b8b8b8);"></div>
<div class="r" style="left:27px;top:443px;width:1546px;height:1px;background:#d4d4d4;"></div>
<div class="r" style="left:1px;top:463px;width:25px;height:1px;background:linear-gradient(90deg,#dedede,#b8b8b8);"></div>
<div class="r" style="left:27px;top:463px;width:1546px;height:1px;background:#d4d4d4;"></div>
<div class="r" style="left:1px;top:483px;width:25px;height:1px;background:linear-gradient(90deg,#dedede,#b8b8b8);"></div>
<div class="r" style="left:27px;top:483px;width:1546px;height:1px;background:#d4d4d4;"></div>
<div class="r" style="left:1px;top:503px;width:25px;height:1px;background:linear-gradient(90deg,#dedede,#b8b8b8);"></div>
<div class="r" style="left:27px;top:503px;width:1546px;height:1px;background:#d4d4d4;"></div>
<div class="r" style="left:1px;top:523px;width:25px;height:1px;background:linear-gradient(90deg,#dedede,#b8b8b8);"></div>
<div class="r" style="left:27px;top:523px;width:1546px;height:1px;background:#d4d4d4;"></div>
<div class="r" style="left:1px;top:543px;width:25px;height:1px;background:linear-gradient(90deg,#dedede,#b8b8b8);"></div>
<div class="r" style="left:27px;top:543px;width:1546px;height:1px;background:#d4d4d4;"></div>
<div class="r" style="left:1px;top:563px;width:25px;height:1px;background:linear-gradient(90deg,#dedede,#b8b8b8);"></div>
<div class="r" style="left:27px;top:563px;width:1546px;height:1px;background:#d4d4d4;"></div>
<div class="r" style="left:1px;top:583px;width:25px;height:1px;background:linear-gradient(90deg,#dedede,#b8b8b8);"></div>
<div class="r" style="left:27px;top:583px;width:1546px;height:1px;background:#d4d4d4;"></div>
<div class="r" style="left:1px;top:603px;width:25px;height:1px;background:linear-gradient(90deg,#dedede,#b8b8b8);"></div>
<div class="r" style="left:27px;top:603px;width:1546px;height:1px;background:#d4d4d4;"></div>
<div class="r" style="left:1px;top:623px;width:25px;height:1px;background:linear-gradient(90deg,#dedede,#b8b8b8);"></div>
<div class="r" style="left:27px;top:623px;width:1546px;height:1px;background:#d4d4d4;"></div>
<div class="r" style="left:1px;top:643px;width:25px;height:1px;background:linear-gradient(90deg,#dedede,#b8b8b8);"></div>
<div class="r" style="left:27px;top:643px;width:1546px;height:1px;background:#d4d4d4;"></div>
<div class="r" style="left:1px;top:663px;width:25px;height:1px;background:linear-gradient(90deg,#dedede,#b8b8b8);"></div>
<div class="r" style="left:27px;top:663px;width:1546px;height:1px;background:#d4d4d4;"></div>
<div class="r" style="left:1px;top:683px;width:25px;height:1px;background:linear-gradient(90deg,#dedede,#b8b8b8);"></div>
<div class="r" style="left:27px;top:683px;width:1546px;height:1px;background:#d4d4d4;"></div>
<div class="r" style="left:1px;top:703px;width:25px;height:1px;background:linear-gradient(90deg,#dedede,#b8b8b8);"></div>
<div class="r" style="left:27px;top:703px;width:1546px;height:1px;background:#d4d4d4;"></div>
<div class="r" style="left:1px;top:723px;width:25px;height:1px;background:linear-gradient(90deg,#dedede,#b8b8b8);"></div>
<div class="r" style="left:27px;top:723px;width:1546px;height:1px;background:#d4d4d4;"></div>
<div class="r" style="left:1px;top:743px;width:25px;height:1px;background:linear-gradient(90deg,#dedede,#b8b8b8);"></div>
<div class="r" style="left:27px;top:743px;width:1546px;height:1px;background:#d4d4d4;"></div>
<div class="r" style="left:1px;top:763px;width:25px;height:1px;background:linear-gradient(90deg,#dedede,#b8b8b8);"></div>
<div class="r" style="left:27px;top:763px;width:1546px;height:1px;background:#d4d4d4;"></div>
<div class="r" style="left:1px;top:783px;width:25px;height:1px;background:linear-gradient(90deg,#dedede,#b8b8b8);"></div>
<div class="r" style="left:27px;top:783px;width:1546px;height:1px;background:#d4d4d4;"></div>
<div class="r" style="left:1px;top:803px;width:25px;height:1px;background:linear-gradient(90deg,#dedede,#b8b8b8);"></div>
<div class="r" style="left:27px;top:803px;width:1546px;height:1px;background:#d4d4d4;"></div>
<div class="r" style="left:1px;top:823px;width:25px;height:1px;background:linear-gradient(90deg,#dedede,#b8b8b8);"></div>
<div class="r" style="left:27px;top:823px;width:1546px;height:1px;background:#d4d4d4;"></div>
<div class="r" style="left:1px;top:843px;width:25px;height:1px;background:linear-gradient(90deg,#dedede,#b8b8b8);"></div>
<div class="r" style="left:27px;top:843px;width:1546px;height:1px;background:#d4d4d4;"></div>
<div class="r" style="left:1px;top:863px;width:25px;height:1px;background:linear-gradient(90deg,#dedede,#b8b8b8);"></div>
<div class="r" style="left:27px;top:863px;width:1546px;height:1px;background:#d4d4d4;"></div>
<div class="r" style="left:1px;top:883px;width:25px;height:1px;background:linear-gradient(90deg,#dedede,#b8b8b8);"></div>
<div class="r" style="left:27px;top:883px;width:1546px;height:1px;background:#d4d4d4;"></div>
<div class="r" style="left:1px;top:903px;width:25px;height:1px;background:linear-gradient(90deg,#dedede,#b8b8b8);"></div>
<div class="r" style="left:27px;top:903px;width:1546px;height:1px;background:#d4d4d4;"></div>
<div class="r" style="left:1px;top:923px;width:25px;height:1px;background:linear-gradient(90deg,#dedede,#b8b8b8);"></div>
<div class="r" style="left:27px;top:923px;width:1546px;height:1px;background:#d4d4d4;"></div>
<div class="r" style="left:1px;top:943px;width:25px;height:1px;background:linear-gradient(90deg,#dedede,#b8b8b8);"></div>
<div class="r" style="left:27px;top:943px;width:1546px;height:1px;background:#d4d4d4;"></div>
<div class="r" style="left:1px;top:963px;width:25px;height:1px;background:linear-gradient(90deg,#dedede,#b8b8b8);"></div>
<div class="r" style="left:27px;top:963px;width:1546px;height:1px;background:#d4d4d4;"></div>
<div class="r" style="left:1px;top:983px;width:25px;height:1px;background:linear-gradient(90deg,#dedede,#b8b8b8);"></div>
<div class="r" style="left:27px;top:983px;width:1546px;height:1px;background:#d4d4d4;"></div>
<div class="r" style="left:1px;top:1003px;width:25px;height:1px;background:linear-gradient(90deg,#dedede,#b8b8b8);"></div>
<div class="r" style="left:27px;top:1003px;width:1546px;height:1px;background:#d4d4d4;"></div>
<div class="r" style="left:1px;top:1023px;width:25px;height:1px;background:linear-gradient(90deg,#dedede,#b8b8b8);"></div>
<div class="r" style="left:27px;top:1023px;width:1546px;height:1px;background:#d4d4d4;"></div>
<div class="r" style="left:1px;top:1043px;width:25px;height:1px;background:linear-gradient(90deg,#dedede,#b8b8b8);"></div>
<div class="r" style="left:27px;top:1043px;width:1546px;height:1px;background:#d4d4d4;"></div>
<div class="r" style="left:1px;top:1063px;width:25px;height:1px;background:linear-gradient(90deg,#dedede,#b8b8b8);"></div>
<div class="r" style="left:27px;top:1063px;width:1546px;height:1px;background:#d4d4d4;"></div>
<div class="r" style="left:1px;top:1083px;width:25px;height:1px;background:linear-gradient(90deg,#dedede,#b8b8b8);"></div>
<div class="r" style="left:27px;top:1083px;width:1546px;height:1px;background:#d4d4d4;"></div>
<div class="r" style="left:1px;top:1103px;width:25px;height:1px;background:linear-gradient(90deg,#dedede,#b8b8b8);"></div>
<div class="r" style="left:27px;top:1103px;width:1546px;height:1px;background:#d4d4d4;"></div>
<div class="r" style="left:1px;top:1123px;width:25px;height:1px;background:linear-gradient(90deg,#dedede,#b8b8b8);"></div>
<div class="r" style="left:27px;top:1123px;width:1546px;height:1px;background:#d4d4d4;"></div>
<div class="r" style="left:1px;top:1143px;width:25px;height:1px;background:linear-gradient(90deg,#dedede,#b8b8b8);"></div>
<div class="r" style="left:27px;top:1143px;width:1546px;height:1px;background:#d4d4d4;"></div>
<div class="r" style="left:1px;top:1163px;width:25px;height:1px;background:linear-gradient(90deg,#dedede,#b8b8b8);"></div>
<div class="r" style="left:27px;top:1163px;width:1546px;height:1px;background:#d4d4d4;"></div>
<div class="r" style="left:190px;top:224px;width:1px;height:956px;background:#d4d4d4;"></div>
<div class="r" style="left:371px;top:224px;width:1px;height:956px;background:#d4d4d4;"></div>
<div class="r" style="left:491px;top:224px;width:1px;height:956px;background:#d4d4d4;"></div>
<div class="r" style="left:624px;top:224px;width:1px;height:956px;background:#d4d4d4;"></div>
<div class="r" style="left:730px;top:224px;width:1px;height:956px;background:#d4d4d4;"></div>
<div class="r" style="left:823px;top:224px;width:1px;height:956px;background:#d4d4d4;"></div>
<div class="r" style="left:931px;top:224px;width:1px;height:956px;background:#d4d4d4;"></div>
<div class="r" style="left:1047px;top:224px;width:1px;height:956px;background:#d4d4d4;"></div>
<div class="r" style="left:1152px;top:224px;width:1px;height:956px;background:#d4d4d4;"></div>
<div class="r" style="left:1216px;top:224px;width:1px;height:956px;background:#d4d4d4;"></div>
<div class="r" style="left:1280px;top:224px;width:1px;height:956px;background:#d4d4d4;"></div>
<div class="r" style="left:1344px;top:224px;width:1px;height:956px;background:#d4d4d4;"></div>
<div class="r" style="left:1408px;top:224px;width:1px;height:956px;background:#d4d4d4;"></div>
<div class="r" style="left:1472px;top:224px;width:1px;height:956px;background:#d4d4d4;"></div>
<div class="r" style="left:1536px;top:224px;width:1px;height:956px;background:#d4d4d4;"></div>
<div class="r" style="left:26px;top:224px;width:1px;height:956px;background:#ababab;"></div>
<div class="r" style="left:25px;top:263px;width:2px;height:21px;background:#107c41;"></div>
<div class="t" style="left:-186px;width:400px;text-align:center;top:224.50px;font-size:13px;color:#262626;">1</div>
<div class="t" style="left:-186px;width:400px;text-align:center;top:244.50px;font-size:13px;color:#262626;">2</div>
<div class="t" style="left:-186px;width:400px;text-align:center;top:264.50px;font-size:13px;color:#107c41;">3</div>
<div class="t" style="left:-186px;width:400px;text-align:center;top:284.50px;font-size:13px;color:#262626;">4</div>
<div class="t" style="left:-186px;width:400px;text-align:center;top:304.50px;font-size:13px;color:#262626;">5</div>
<div class="t" style="left:-186px;width:400px;text-align:center;top:324.50px;font-size:13px;color:#262626;">6</div>
<div class="t" style="left:-186px;width:400px;text-align:center;top:344.50px;font-size:13px;color:#262626;">7</div>
<div class="t" style="left:-186px;width:400px;text-align:center;top:364.50px;font-size:13px;color:#262626;">8</div>
<div class="t" style="left:-186px;width:400px;text-align:center;top:384.50px;font-size:13px;color:#262626;">9</div>
<div class="t" style="left:-186px;width:400px;text-align:center;top:404.50px;font-size:13px;color:#262626;">10</div>
<div class="t" style="left:-186px;width:400px;text-align:center;top:424.50px;font-size:13px;color:#262626;">11</div>
<div class="t" style="left:-186px;width:400px;text-align:center;top:444.50px;font-size:13px;color:#262626;">12</div>
<div class="t" style="left:-186px;width:400px;text-align:center;top:464.50px;font-size:13px;color:#262626;">13</div>
<div class="t" style="left:-186px;width:400px;text-align:center;top:484.50px;font-size:13px;color:#262626;">14</div>
<div class="t" style="left:-186px;width:400px;text-align:center;top:504.50px;font-size:13px;color:#262626;">15</div>
<div class="t" style="left:-186px;width:400px;text-align:center;top:524.50px;font-size:13px;color:#262626;">16</div>
<div class="t" style="left:-186px;width:400px;text-align:center;top:544.50px;font-size:13px;color:#262626;">17</div>
<div class="t" style="left:-186px;width:400px;text-align:center;top:564.50px;font-size:13px;color:#262626;">18</div>
<div class="t" style="left:-186px;width:400px;text-align:center;top:584.50px;font-size:13px;color:#262626;">19</div>
<div class="t" style="left:-186px;width:400px;text-align:center;top:604.50px;font-size:13px;color:#262626;">20</div>
<div class="t" style="left:-186px;width:400px;text-align:center;top:624.50px;font-size:13px;color:#262626;">21</div>
<div class="t" style="left:-186px;width:400px;text-align:center;top:644.50px;font-size:13px;color:#262626;">22</div>
<div class="t" style="left:-186px;width:400px;text-align:center;top:664.50px;font-size:13px;color:#262626;">23</div>
<div class="t" style="left:-186px;width:400px;text-align:center;top:684.50px;font-size:13px;color:#262626;">24</div>
<div class="t" style="left:-186px;width:400px;text-align:center;top:704.50px;font-size:13px;color:#262626;">25</div>
<div class="t" style="left:-186px;width:400px;text-align:center;top:724.50px;font-size:13px;color:#262626;">26</div>
<div class="t" style="left:-186px;width:400px;text-align:center;top:744.50px;font-size:13px;color:#262626;">27</div>
<div class="t" style="left:-186px;width:400px;text-align:center;top:764.50px;font-size:13px;color:#262626;">28</div>
<div class="t" style="left:-186px;width:400px;text-align:center;top:784.50px;font-size:13px;color:#262626;">29</div>
<div class="t" style="left:-186px;width:400px;text-align:center;top:804.50px;font-size:13px;color:#262626;">30</div>
<div class="t" style="left:-186px;width:400px;text-align:center;top:824.50px;font-size:13px;color:#262626;">31</div>
<div class="t" style="left:-186px;width:400px;text-align:center;top:844.50px;font-size:13px;color:#262626;">32</div>
<div class="t" style="left:-186px;width:400px;text-align:center;top:864.50px;font-size:13px;color:#262626;">33</div>
<div class="t" style="left:-186px;width:400px;text-align:center;top:884.50px;font-size:13px;color:#262626;">34</div>
<div class="t" style="left:-186px;width:400px;text-align:center;top:904.50px;font-size:13px;color:#262626;">35</div>
<div class="t" style="left:-186px;width:400px;text-align:center;top:924.50px;font-size:13px;color:#262626;">36</div>
<div class="t" style="left:-186px;width:400px;text-align:center;top:944.50px;font-size:13px;color:#262626;">37</div>
<div class="t" style="left:-186px;width:400px;text-align:center;top:964.50px;font-size:13px;color:#262626;">38</div>
<div class="t" style="left:-186px;width:400px;text-align:center;top:984.50px;font-size:13px;color:#262626;">39</div>
<div class="t" style="left:-186px;width:400px;text-align:center;top:1004.50px;font-size:13px;color:#262626;">40</div>
<div class="t" style="left:-186px;width:400px;text-align:center;top:1024.50px;font-size:13px;color:#262626;">41</div>
<div class="t" style="left:-186px;width:400px;text-align:center;top:1044.50px;font-size:13px;color:#262626;">42</div>
<div class="t" style="left:-186px;width:400px;text-align:center;top:1064.50px;font-size:13px;color:#262626;">43</div>
<div class="t" style="left:-186px;width:400px;text-align:center;top:1084.50px;font-size:13px;color:#262626;">44</div>
<div class="t" style="left:-186px;width:400px;text-align:center;top:1104.50px;font-size:13px;color:#262626;">45</div>
<div class="t" style="left:-186px;width:400px;text-align:center;top:1124.50px;font-size:13px;color:#262626;">46</div>
<div class="t" style="left:-186px;width:400px;text-align:center;top:1144.50px;font-size:13px;color:#262626;">47</div>
<div class="t" style="left:-186px;width:400px;text-align:center;top:1164.50px;font-size:13px;color:#262626;">48</div>
<div class="r" style="left:1573px;top:224px;width:1px;height:957px;background:#ababab;"></div>
<div class="r" style="left:1px;top:1180px;width:1573px;height:1px;background:#ababab;"></div>
<div class="r" style="left:1574px;top:204px;width:21px;height:977px;background:#e6e6e6;"></div>
<div class="r" style="left:191px;top:264px;width:180px;height:19px;background:#c6c6c6;"></div>
<div class="r" style="left:189px;top:262px;width:184px;height:2px;background:#107c41;"></div>
<div class="r" style="left:189px;top:283px;width:180px;height:2px;background:#107c41;"></div>
<div class="r" style="left:189px;top:262px;width:2px;height:23px;background:#107c41;"></div>
<div class="r" style="left:371px;top:262px;width:2px;height:19px;background:#107c41;"></div>
<div class="r" style="left:369px;top:281px;width:5px;height:5px;background:#107c41;box-shadow:0 0 0 1px #fff;"></div>
<div class="r" style="left:369px;top:265px;width:1px;height:18px;background:#000;"></div>
<div class="t" style="left:1050px;top:225.41px;font-size:13.25px;color:#000;-webkit-text-stroke:0.1px currentColor;">Totals</div>
<div class="t" style="left:374px;top:245.41px;font-size:13.25px;color:#000;-webkit-text-stroke:0.1px currentColor;">0-50k</div>
<div class="t" style="left:494px;top:245.41px;font-size:13.25px;color:#000;-webkit-text-stroke:0.1px currentColor;">50k-125k</div>
<div class="t" style="left:627px;top:245.41px;font-size:13.25px;color:#000;-webkit-text-stroke:0.1px currentColor;">125k-250k</div>
<div class="t" style="left:733px;top:245.41px;font-size:13.25px;color:#000;-webkit-text-stroke:0.1px currentColor;">250k-350k</div>
<div class="t" style="left:826px;top:245.41px;font-size:13.25px;color:#000;-webkit-text-stroke:0.1px currentColor;">350k-500k</div>
<div class="t" style="left:934px;top:245.41px;font-size:13.25px;color:#000;-webkit-text-stroke:0.1px currentColor;">500k-525+k</div>
<div class="t" style="left:29px;top:265.41px;font-size:13.25px;color:#000;-webkit-text-stroke:0.1px currentColor;">Block Reward</div>
<div class="t" style="left:-31px;width:400px;text-align:right;top:264.58px;font-size:12.75px;color:#d00000;-webkit-text-stroke:0.1px currentColor;">20000</div>
<div class="t" style="left:89px;width:400px;text-align:right;top:264.58px;font-size:12.75px;color:#000;-webkit-text-stroke:0.1px currentColor;">28,800,000.00</div>
<div class="t" style="left:222px;width:400px;text-align:right;top:264.58px;font-size:12.75px;color:#000;-webkit-text-stroke:0.1px currentColor;">28,800,000.00</div>
<div class="t" style="left:328px;width:400px;text-align:right;top:264.58px;font-size:12.75px;color:#000;-webkit-text-stroke:0.1px currentColor;">28,800,000.00</div>
<div class="t" style="left:421px;width:400px;text-align:right;top:264.58px;font-size:12.75px;color:#000;-webkit-text-stroke:0.1px currentColor;">28,800,000.00</div>
<div class="t" style="left:529px;width:400px;text-align:right;top:264.58px;font-size:12.75px;color:#000;-webkit-text-stroke:0.1px currentColor;">28,800,000.00</div>
<div class="t" style="left:645px;width:400px;text-align:right;top:264.58px;font-size:12.75px;color:#000;-webkit-text-stroke:0.1px currentColor;">28,800,000.00</div>
<div class="t" style="left:750px;width:400px;text-align:right;top:264.58px;font-size:12.75px;color:#000;-webkit-text-stroke:0.1px currentColor;">172,800,000.00</div>
<div class="t" style="left:29px;top:285.41px;font-size:13.25px;color:#000;-webkit-text-stroke:0.1px currentColor;">POS</div>
<div class="t" style="left:-31px;width:400px;text-align:right;top:284.58px;font-size:12.75px;color:#000;-webkit-text-stroke:0.1px currentColor;">0.7</div>
<div class="t" style="left:89px;width:400px;text-align:right;top:284.58px;font-size:12.75px;color:#70ad47;-webkit-text-stroke:0.1px currentColor;">20,160,000.00</div>
<div class="t" style="left:222px;width:400px;text-align:right;top:284.58px;font-size:12.75px;color:#70ad47;-webkit-text-stroke:0.1px currentColor;">17,280,000.00</div>
<div class="t" style="left:328px;width:400px;text-align:right;top:284.58px;font-size:12.75px;color:#70ad47;-webkit-text-stroke:0.1px currentColor;">14,400,000.00</div>
<div class="t" style="left:421px;width:400px;text-align:right;top:284.58px;font-size:12.75px;color:#70ad47;-webkit-text-stroke:0.1px currentColor;">11,520,000.00</div>
<div class="t" style="left:529px;width:400px;text-align:right;top:284.58px;font-size:12.75px;color:#70ad47;-webkit-text-stroke:0.1px currentColor;">8,640,000.00</div>
<div class="t" style="left:645px;width:400px;text-align:right;top:284.58px;font-size:12.75px;color:#70ad47;-webkit-text-stroke:0.1px currentColor;">5,760,000.00</div>
<div class="t" style="left:750px;width:400px;text-align:right;top:284.58px;font-size:12.75px;color:#000;-webkit-text-stroke:0.1px currentColor;">77,760,000.00</div>
<div class="t" style="left:29px;top:305.41px;font-size:13.25px;color:#000;-webkit-text-stroke:0.1px currentColor;">MN</div>
<div class="t" style="left:-31px;width:400px;text-align:right;top:304.58px;font-size:12.75px;color:#000;-webkit-text-stroke:0.1px currentColor;">0.3</div>
<div class="t" style="left:89px;width:400px;text-align:right;top:304.58px;font-size:12.75px;color:#70ad47;-webkit-text-stroke:0.1px currentColor;">8,640,000.00</div>
<div class="t" style="left:222px;width:400px;text-align:right;top:304.58px;font-size:12.75px;color:#70ad47;-webkit-text-stroke:0.1px currentColor;">11,520,000.00</div>
<div class="t" style="left:328px;width:400px;text-align:right;top:304.58px;font-size:12.75px;color:#70ad47;-webkit-text-stroke:0.1px currentColor;">14,400,000.00</div>
<div class="t" style="left:421px;width:400px;text-align:right;top:304.58px;font-size:12.75px;color:#70ad47;-webkit-text-stroke:0.1px currentColor;">17,280,000.00</div>
<div class="t" style="left:529px;width:400px;text-align:right;top:304.58px;font-size:12.75px;color:#70ad47;-webkit-text-stroke:0.1px currentColor;">20,160,000.00</div>
<div class="t" style="left:645px;width:400px;text-align:right;top:304.58px;font-size:12.75px;color:#70ad47;-webkit-text-stroke:0.1px currentColor;">23,040,000.00</div>
<div class="t" style="left:750px;width:400px;text-align:right;top:304.58px;font-size:12.75px;color:#000;-webkit-text-stroke:0.1px currentColor;">95,040,000.00</div>
<div class="t" style="left:29px;top:325.41px;font-size:13.25px;color:#000;-webkit-text-stroke:0.1px currentColor;">POW</div>
<div class="t" style="left:193px;top:325.41px;font-size:13.25px;color:#000;-webkit-text-stroke:0.1px currentColor;">stepped  amts. 300,450,550</div>
<div class="t" style="left:89px;width:400px;text-align:right;top:324.58px;font-size:12.75px;color:#70ad47;-webkit-text-stroke:0.1px currentColor;">432,000.00</div>
<div class="t" style="left:222px;width:400px;text-align:right;top:324.58px;font-size:12.75px;color:#70ad47;-webkit-text-stroke:0.1px currentColor;">648,000.00</div>
<div class="t" style="left:328px;width:400px;text-align:right;top:324.58px;font-size:12.75px;color:#70ad47;-webkit-text-stroke:0.1px currentColor;">792,000.00</div>
<div class="t" style="left:421px;width:400px;text-align:right;top:324.58px;font-size:12.75px;color:#70ad47;-webkit-text-stroke:0.1px currentColor;">0.00</div>
<div class="t" style="left:529px;width:400px;text-align:right;top:324.58px;font-size:12.75px;color:#70ad47;-webkit-text-stroke:0.1px currentColor;">0.00</div>
<div class="t" style="left:645px;width:400px;text-align:right;top:324.58px;font-size:12.75px;color:#70ad47;-webkit-text-stroke:0.1px currentColor;">0.00</div>
<div class="t" style="left:750px;width:400px;text-align:right;top:324.58px;font-size:12.75px;color:#000;-webkit-text-stroke:0.1px currentColor;">1,872,000.00</div>
<div class="t" style="left:29px;top:345.41px;font-size:13.25px;color:#000;-webkit-text-stroke:0.1px currentColor;">POS %</div>
<div class="t" style="left:374px;top:345.41px;font-size:13.25px;color:#000;-webkit-text-stroke:0.1px currentColor;">%70 POS</div>
<div class="t" style="left:494px;top:345.41px;font-size:13.25px;color:#000;-webkit-text-stroke:0.1px currentColor;">%60 POS</div>
<div class="t" style="left:627px;top:345.41px;font-size:13.25px;color:#000;-webkit-text-stroke:0.1px currentColor;">%50 POS</div>
<div class="t" style="left:733px;top:345.41px;font-size:13.25px;color:#000;-webkit-text-stroke:0.1px currentColor;">%40 POS</div>
<div class="t" style="left:826px;top:345.41px;font-size:13.25px;color:#000;-webkit-text-stroke:0.1px currentColor;">%30 POS</div>
<div class="t" style="left:934px;top:345.41px;font-size:13.25px;color:#000;-webkit-text-stroke:0.1px currentColor;">%20 POS</div>
<div class="t" style="left:29px;top:365.41px;font-size:13.25px;color:#000;-webkit-text-stroke:0.1px currentColor;">MN %</div>
<div class="t" style="left:374px;top:365.41px;font-size:13.25px;color:#000;-webkit-text-stroke:0.1px currentColor;">%30 MN</div>
<div class="t" style="left:494px;top:365.41px;font-size:13.25px;color:#000;-webkit-text-stroke:0.1px currentColor;">%40 MN</div>
<div class="t" style="left:627px;top:365.41px;font-size:13.25px;color:#000;-webkit-text-stroke:0.1px currentColor;">%50 MN</div>
<div class="t" style="left:733px;top:365.41px;font-size:13.25px;color:#000;-webkit-text-stroke:0.1px currentColor;">%60 MN</div>
<div class="t" style="left:826px;top:365.41px;font-size:13.25px;color:#000;-webkit-text-stroke:0.1px currentColor;">%70 MN</div>
<div class="t" style="left:934px;top:365.41px;font-size:13.25px;color:#000;-webkit-text-stroke:0.1px currentColor;">%80 MN</div>
<div class="t" style="left:29px;top:385.41px;font-size:13.25px;color:#000;-webkit-text-stroke:0.1px currentColor;">Premine</div>
<div class="t" style="left:-31px;width:400px;text-align:right;top:384.58px;font-size:12.75px;color:#ff0000;-webkit-text-stroke:0.1px currentColor;">0.25</div>
<div class="t" style="left:89px;width:400px;text-align:right;top:384.58px;font-size:12.75px;color:#000;-webkit-text-stroke:0.1px currentColor;">25,000,000,000.00</div>
<div class="t" style="left:29px;top:425.41px;font-size:13.25px;color:#000;-webkit-text-stroke:0.1px currentColor;">Block Time</div>
<div class="t" style="left:-31px;width:400px;text-align:right;top:424.58px;font-size:12.75px;color:#ff0000;-webkit-text-stroke:0.1px currentColor;">1</div>
<div class="t" style="left:29px;top:445.41px;font-size:13.25px;color:#000;-webkit-text-stroke:0.1px currentColor;">Blocks Per Day / Year</div>
<div class="t" style="left:-31px;width:400px;text-align:right;top:444.58px;font-size:12.75px;color:#000;-webkit-text-stroke:0.1px currentColor;">1440</div>
<div class="t" style="left:89px;width:400px;text-align:right;top:444.58px;font-size:12.75px;color:#000;-webkit-text-stroke:0.1px currentColor;">525600</div>
<div class="t" style="left:29px;top:465.41px;font-size:13.25px;color:#000;-webkit-text-stroke:0.1px currentColor;">MN Cost</div>
<div class="t" style="left:-31px;width:400px;text-align:right;top:464.58px;font-size:12.75px;color:#ff0000;-webkit-text-stroke:0.1px currentColor;">1000000</div>
<div class="t" style="left:29px;top:485.41px;font-size:13.25px;color:#000;-webkit-text-stroke:0.1px currentColor;">MN ROI 1</div>
<div class="t" style="left:-31px;width:400px;text-align:right;top:484.58px;font-size:12.75px;color:#000;-webkit-text-stroke:0.1px currentColor;">1</div>
<div class="t" style="left:89px;width:400px;text-align:right;top:484.58px;font-size:12.75px;color:#000;-webkit-text-stroke:0.1px currentColor;">8,640,000.00</div>
<div class="t" style="left:222px;width:400px;text-align:right;top:484.58px;font-size:12.75px;color:#000;-webkit-text-stroke:0.1px currentColor;">11,520,000.00</div>
<div class="t" style="left:328px;width:400px;text-align:right;top:484.58px;font-size:12.75px;color:#000;-webkit-text-stroke:0.1px currentColor;">14,400,000.00</div>
<div class="t" style="left:421px;width:400px;text-align:right;top:484.58px;font-size:12.75px;color:#000;-webkit-text-stroke:0.1px currentColor;">17,280,000.00</div>
<div class="t" style="left:529px;width:400px;text-align:right;top:484.58px;font-size:12.75px;color:#000;-webkit-text-stroke:0.1px currentColor;">20,160,000.00</div>
<div class="t" style="left:645px;width:400px;text-align:right;top:484.58px;font-size:12.75px;color:#000;-webkit-text-stroke:0.1px currentColor;">23,040,000.00</div>
<div class="t" style="left:29px;top:505.41px;font-size:13.25px;color:#000;-webkit-text-stroke:0.1px currentColor;">MN ROI 100</div>
<div class="t" style="left:-31px;width:400px;text-align:right;top:504.58px;font-size:12.75px;color:#000;-webkit-text-stroke:0.1px currentColor;">100</div>
<div class="t" style="left:89px;width:400px;text-align:right;top:504.58px;font-size:12.75px;color:#000;-webkit-text-stroke:0.1px currentColor;">86,400.00</div>
<div class="t" style="left:222px;width:400px;text-align:right;top:504.58px;font-size:12.75px;color:#000;-webkit-text-stroke:0.1px currentColor;">115,200.00</div>
<div class="t" style="left:328px;width:400px;text-align:right;top:504.58px;font-size:12.75px;color:#000;-webkit-text-stroke:0.1px currentColor;">144,000.00</div>
<div class="t" style="left:421px;width:400px;text-align:right;top:504.58px;font-size:12.75px;color:#000;-webkit-text-stroke:0.1px currentColor;">172,800.00</div>
<div class="t" style="left:529px;width:400px;text-align:right;top:504.58px;font-size:12.75px;color:#000;-webkit-text-stroke:0.1px currentColor;">201,600.00</div>
<div class="t" style="left:645px;width:400px;text-align:right;top:504.58px;font-size:12.75px;color:#000;-webkit-text-stroke:0.1px currentColor;">230,400.00</div>
<div class="t" style="left:29px;top:525.41px;font-size:13.25px;color:#000;-webkit-text-stroke:0.1px currentColor;">MN ROI 1000</div>
<div class="t" style="left:-31px;width:400px;text-align:right;top:524.58px;font-size:12.75px;color:#000;-webkit-text-stroke:0.1px currentColor;">1000</div>
<div class="t" style="left:89px;width:400px;text-align:right;top:524.58px;font-size:12.75px;color:#000;-webkit-text-stroke:0.1px currentColor;">8,640.00</div>
<div class="t" style="left:222px;width:400px;text-align:right;top:524.58px;font-size:12.75px;color:#000;-webkit-text-stroke:0.1px currentColor;">11,520.00</div>
<div class="t" style="left:328px;width:400px;text-align:right;top:524.58px;font-size:12.75px;color:#000;-webkit-text-stroke:0.1px currentColor;">14,400.00</div>
<div class="t" style="left:421px;width:400px;text-align:right;top:524.58px;font-size:12.75px;color:#000;-webkit-text-stroke:0.1px currentColor;">17,280.00</div>
<div class="t" style="left:529px;width:400px;text-align:right;top:524.58px;font-size:12.75px;color:#000;-webkit-text-stroke:0.1px currentColor;">20,160.00</div>
<div class="t" style="left:645px;width:400px;text-align:right;top:524.58px;font-size:12.75px;color:#000;-webkit-text-stroke:0.1px currentColor;">23,040.00</div>
<div class="t" style="left:29px;top:565.41px;font-size:13.25px;color:#000;-webkit-text-stroke:0.1px currentColor;">MN ROI Days 1</div>
<div class="t" style="left:-31px;width:400px;text-align:right;top:564.58px;font-size:12.75px;color:#000;-webkit-text-stroke:0.1px currentColor;">1</div>
<div class="t" style="left:89px;width:400px;text-align:right;top:564.58px;font-size:12.75px;color:#000;-webkit-text-stroke:0.1px currentColor;">0.115740741</div>
<div class="t" style="left:222px;width:400px;text-align:right;top:564.58px;font-size:12.75px;color:#000;-webkit-text-stroke:0.1px currentColor;">0.086805556</div>
<div class="t" style="left:328px;width:400px;text-align:right;top:564.58px;font-size:12.75px;color:#000;-webkit-text-stroke:0.1px currentColor;">0.069444444</div>
<div class="t" style="left:421px;width:400px;text-align:right;top:564.58px;font-size:12.75px;color:#000;-webkit-text-stroke:0.1px currentColor;">0.05787037</div>
<div class="t" style="left:529px;width:400px;text-align:right;top:564.58px;font-size:12.75px;color:#000;-webkit-text-stroke:0.1px currentColor;">0.049603175</div>
<div class="t" style="left:645px;width:400px;text-align:right;top:564.58px;font-size:12.75px;color:#000;-webkit-text-stroke:0.1px currentColor;">0.043402778</div>
<div class="t" style="left:29px;top:585.41px;font-size:13.25px;color:#000;-webkit-text-stroke:0.1px currentColor;">MN ROI Days 100</div>
<div class="t" style="left:-31px;width:400px;text-align:right;top:584.58px;font-size:12.75px;color:#000;-webkit-text-stroke:0.1px currentColor;">100</div>
<div class="t" style="left:89px;width:400px;text-align:right;top:584.58px;font-size:12.75px;color:#000;-webkit-text-stroke:0.1px currentColor;">11.57407407</div>
<div class="t" style="left:222px;width:400px;text-align:right;top:584.58px;font-size:12.75px;color:#000;-webkit-text-stroke:0.1px currentColor;">8.680555556</div>
<div class="t" style="left:328px;width:400px;text-align:right;top:584.58px;font-size:12.75px;color:#000;-webkit-text-stroke:0.1px currentColor;">6.944444444</div>
<div class="t" style="left:421px;width:400px;text-align:right;top:584.58px;font-size:12.75px;color:#000;-webkit-text-stroke:0.1px currentColor;">5.787037037</div>
<div class="t" style="left:529px;width:400px;text-align:right;top:584.58px;font-size:12.75px;color:#000;-webkit-text-stroke:0.1px currentColor;">4.96031746</div>
<div class="t" style="left:645px;width:400px;text-align:right;top:584.58px;font-size:12.75px;color:#000;-webkit-text-stroke:0.1px currentColor;">4.340277778</div>
<div class="t" style="left:29px;top:605.41px;font-size:13.25px;color:#000;-webkit-text-stroke:0.1px currentColor;">MN ROI Days 1000</div>
<div class="t" style="left:-31px;width:400px;text-align:right;top:604.58px;font-size:12.75px;color:#000;-webkit-text-stroke:0.1px currentColor;">1000</div>
<div class="t" style="left:89px;width:400px;text-align:right;top:604.58px;font-size:12.75px;color:#000;-webkit-text-stroke:0.1px currentColor;">115.7407407</div>
<div class="t" style="left:222px;width:400px;text-align:right;top:604.58px;font-size:12.75px;color:#000;-webkit-text-stroke:0.1px currentColor;">86.80555556</div>
<div class="t" style="left:328px;width:400px;text-align:right;top:604.58px;font-size:12.75px;color:#000;-webkit-text-stroke:0.1px currentColor;">69.44444444</div>
<div class="t" style="left:421px;width:400px;text-align:right;top:604.58px;font-size:12.75px;color:#000;-webkit-text-stroke:0.1px currentColor;">57.87037037</div>
<div class="t" style="left:529px;width:400px;text-align:right;top:604.58px;font-size:12.75px;color:#000;-webkit-text-stroke:0.1px currentColor;">49.6031746</div>
<div class="t" style="left:645px;width:400px;text-align:right;top:604.58px;font-size:12.75px;color:#000;-webkit-text-stroke:0.1px currentColor;">43.40277778</div>
<div class="t" style="left:29px;top:645.41px;font-size:13.25px;color:#000;-webkit-text-stroke:0.1px currentColor;">After Premine</div>
<div class="t" style="left:-31px;width:400px;text-align:right;top:644.58px;font-size:12.75px;color:#000;-webkit-text-stroke:0.1px currentColor;">75,000,000,000.00</div>
<div class="t" style="left:750px;width:400px;text-align:right;top:644.58px;font-size:12.75px;color:#000;-webkit-text-stroke:0.1px currentColor;">174,672,000.00</div>
<div class="t" style="left:29px;top:665.41px;font-size:13.25px;color:#000;-webkit-text-stroke:0.1px currentColor;">Total Coins</div>
<div class="t" style="left:-31px;width:400px;text-align:right;top:664.58px;font-size:12.75px;color:#ff0000;-webkit-text-stroke:0.1px currentColor;">100,000,000,000.00</div>
<div class="t" style="left:89px;width:400px;text-align:right;top:664.58px;font-size:12.75px;color:#000;-webkit-text-stroke:0.1px currentColor;">29,232,000.00</div>
<div class="t" style="left:222px;width:400px;text-align:right;top:664.58px;font-size:12.75px;color:#000;-webkit-text-stroke:0.1px currentColor;">29,448,000.00</div>
<div class="t" style="left:328px;width:400px;text-align:right;top:664.58px;font-size:12.75px;color:#000;-webkit-text-stroke:0.1px currentColor;">29,592,000.00</div>
<div class="t" style="left:421px;width:400px;text-align:right;top:664.58px;font-size:12.75px;color:#000;-webkit-text-stroke:0.1px currentColor;">28,800,000.00</div>
<div class="t" style="left:529px;width:400px;text-align:right;top:664.58px;font-size:12.75px;color:#000;-webkit-text-stroke:0.1px currentColor;">28,800,000.00</div>
<div class="t" style="left:645px;width:400px;text-align:right;top:664.58px;font-size:12.75px;color:#000;-webkit-text-stroke:0.1px currentColor;">28,800,000.00</div>
<div class="t" style="left:750px;width:400px;text-align:right;top:664.58px;font-size:12.75px;color:#000;-webkit-text-stroke:0.1px currentColor;">174,672,000.00</div>
<div class="t" style="left:29px;top:705.41px;font-size:13.25px;color:#000;-webkit-text-stroke:0.1px currentColor;">Swap 200:1</div>
<div class="t" style="left:-31px;width:400px;text-align:right;top:704.58px;font-size:12.75px;color:#000;-webkit-text-stroke:0.1px currentColor;">250,000,000,000.00</div>
<div class="t" style="left:89px;width:400px;text-align:right;top:704.58px;font-size:12.75px;color:#ff0000;-webkit-text-stroke:0.1px currentColor;">200.00</div>
<div class="t" style="left:222px;width:400px;text-align:right;top:704.58px;font-size:12.75px;color:#000;-webkit-text-stroke:0.1px currentColor;">1,250,000,000.00</div>
<div class="t" style="left:29px;top:725.41px;font-size:13.25px;color:#000;-webkit-text-stroke:0.1px currentColor;">Days Until Mined</div>
<div class="t" style="left:-31px;width:400px;text-align:right;top:724.58px;font-size:12.75px;color:#000;-webkit-text-stroke:0.1px currentColor;">428.38</div>
<div class="t" style="left:1050px;top:725.41px;font-size:13.25px;color:#000;-webkit-text-stroke:0.1px currentColor;">DIFF</div>
<div class="t" style="left:29px;top:745.41px;font-size:13.25px;color:#000;-webkit-text-stroke:0.1px currentColor;">Final Amount</div>
<div class="t" style="left:-31px;width:400px;text-align:right;top:744.58px;font-size:12.75px;color:#000;-webkit-text-stroke:0.1px currentColor;">74,825,327,800.00</div>
<div class="t" style="left:750px;width:400px;text-align:right;top:744.58px;font-size:12.75px;color:#000;-webkit-text-stroke:0.1px currentColor;">0.00</div>
<div class="r" style="left:1px;top:1181px;width:1594px;height:27px;background:#e6e6e6;"></div>
<div class="r" style="left:1px;top:1208px;width:1594px;height:1px;background:#d4d4d4;"></div>
<svg class="s" style="left:28px;top:1190px;" width="5" height="8" viewBox="0 0 5 8"><path d="M4 0 V7 L0 3.5z" fill="#c6c6c6"/></svg>
<svg class="s" style="left:57px;top:1190px;" width="5" height="8" viewBox="0 0 5 8"><path d="M0 0 V7 L4 3.5z" fill="#c6c6c6"/></svg>
<div class="r" style="left:101px;top:1180px;width:65px;height:25px;background:#fff;box-sizing:border-box;border-left:1px solid #ababab;border-right:1px solid #ababab;"></div>
<div class="r" style="left:101px;top:1203px;width:65px;height:2px;background:#107c41;"></div>
<div class="t" style="left:113px;top:1183.84px;font-size:12px;color:#107c41;font-weight:bold;">Sheet1</div>
<svg class="s" style="left:199px;top:1186px;" width="17" height="17" viewBox="0 0 17 17"><circle cx="8" cy="8" r="7.5" fill="none" stroke="#c0c0c0"/><path d="M8 4v8 M4 8h8" stroke="#b0b0b0" stroke-width="1.4"/></svg>
<div class="r" style="left:957px;top:1188px;width:2px;height:2px;background:#9a9a9a;"></div>
<div class="r" style="left:957px;top:1192px;width:2px;height:2px;background:#9a9a9a;"></div>
<div class="r" style="left:957px;top:1196px;width:2px;height:2px;background:#9a9a9a;"></div>
<div class="r" style="left:974px;top:1187px;width:15px;height:15px;background:#fff;box-sizing:border-box;border:1px solid #ababab;"></div>
<svg class="s" style="left:978px;top:1190px;" width="6" height="9" viewBox="0 0 6 9"><path d="M5 0 V8 L0 4z" fill="#666"/></svg>
<div class="r" style="left:988px;top:1187px;width:533px;height:15px;background:#fff;box-sizing:border-box;border:1px solid #ababab;"></div>
<div class="r" style="left:1521px;top:1187px;width:40px;height:15px;background:#dadada;"></div>
<div class="r" style="left:1561px;top:1187px;width:15px;height:15px;background:#fff;box-sizing:border-box;border:1px solid #ababab;"></div>
<svg class="s" style="left:1566px;top:1190px;" width="6" height="9" viewBox="0 0 6 9"><path d="M0 0 V8 L5 4z" fill="#666"/></svg>
<div class="r" style="left:1577px;top:206px;width:15px;height:15px;background:#fff;box-sizing:border-box;border:1px solid #ababab;"></div>
<svg class="s" style="left:1580px;top:210px;" width="9" height="5" viewBox="0 0 9 5"><path d="M0 4.5h8.5l-4.25-4.25z" fill="#777"/></svg>
<div class="r" style="left:1577px;top:221px;width:15px;height:924px;background:#fff;box-sizing:border-box;border:1px solid #ababab;"></div>
<div class="r" style="left:1577px;top:1145px;width:15px;height:21px;background:#dadada;"></div>
<div class="r" style="left:1577px;top:1166px;width:15px;height:15px;background:#fff;box-sizing:border-box;border:1px solid #ababab;"></div>
<svg class="s" style="left:1580px;top:1172px;" width="9" height="5" viewBox="0 0 9 5"><path d="M0 0h8.5l-4.25 4.25z" fill="#777"/></svg>
<div class="r" style="left:1px;top:1209px;width:1594px;height:21px;background:#f3f3f3;"></div>
<div class="t" style="left:9px;top:1208.02px;font-size:11.5px;color:#444;">Enter</div>
<svg class="s" style="left:1309px;top:1211px;" width="15" height="15" viewBox="0 0 15 15"><g fill="none" stroke="#666"><path d="M1.5 1.5h12v12h-12z M1.5 5.5h12 M1.5 9.5h12 M5.5 1.5v12 M9.5 1.5v12"/></g></svg>
<svg class="s" style="left:1347px;top:1211px;" width="15" height="15" viewBox="0 0 15 15"><g fill="none" stroke="#666"><path d="M1.5 1.5h12v12h-12z M4.5 3.5h6v8h-6z"/><path d="M6 5.5h3 M6 7.5h3 M6 9.5h3" stroke-width="0.9"/></g></svg>
<svg class="s" style="left:1385px;top:1211px;" width="15" height="15" viewBox="0 0 15 15"><g fill="none" stroke="#666"><path d="M1.5 1.5h12v12h-12z M1.5 8.5h7v-7 M5.5 1.5v7"/></g></svg>
<div class="r" style="left:1417px;top:1218px;width:7px;height:2px;background:#666;"></div>
<div class="r" style="left:1427px;top:1219px;width:100px;height:1px;background:#999;"></div>
<div class="r" style="left:1477px;top:1215px;width:1px;height:8px;background:#999;"></div>
<div class="r" style="left:1530px;top:1218px;width:8px;height:2px;background:#666;"></div>
<div class="r" style="left:1533px;top:1215px;width:2px;height:8px;background:#666;"></div>
<div class="t" style="left:1549px;top:1209.19px;font-size:11px;color:#a6a6a6;">100%</div>
<div class="r" style="left:0px;top:0px;width:1px;height:1231px;background:#217346;"></div>
<div class="r" style="left:1595px;top:0px;width:1px;height:1231px;background:#217346;"></div>
<div class="r" style="left:0px;top:1230px;width:1596px;height:1px;background:#217346;"></div>
</body></html>
